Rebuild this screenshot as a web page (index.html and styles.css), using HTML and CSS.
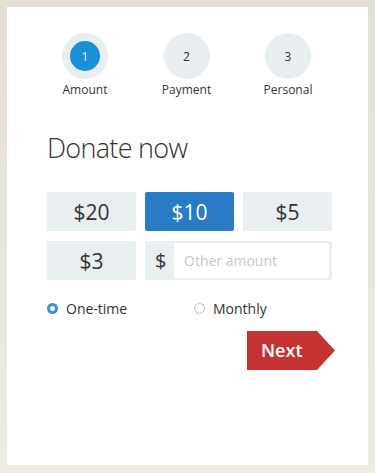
FILE: index.html
```html
<!DOCTYPE html>
<html><head>
<title>Donate now</title>
<link rel="stylesheet" href="styles.css">
<meta charset="UTF-8">
</head>
<body>
<div class="card">

<div class="steps">
  <div class="step active"><div class="dot"><span>1</span></div><div class="label">Amount</div></div>
  <div class="step"><div class="dot"><span>2</span></div><div class="label">Payment</div></div>
  <div class="step"><div class="dot"><span>3</span></div><div class="label">Personal</div></div>
</div>

<h1>Donate now</h1>

<div class="amounts">
  <div class="amt">$20</div>
  <div class="amt selected">$10</div>
  <div class="amt">$5</div>
  <div class="amt">$3</div>
  <div class="other">
    <span class="cur">$</span>
    <div class="field">Other amount</div>
  </div>
</div>

<div class="freq">
  <div class="opt"><span class="radio on"></span>One-time</div>
  <div class="opt"><span class="radio"></span>Monthly</div>
</div>

<div class="actions">
  <div class="next">Next</div>
</div>

</div>
</body></html>
```

FILE: styles.css
```css
html { background: #e6e3da; }
body {
  margin: 0;
  padding: 7px;
  font-family: "Open Sans", "Liberation Sans", sans-serif;
  color: #333;
  background: linear-gradient(#e3dfd5, #eeebe3);
  min-height: 473px;
  box-sizing: border-box;
}

.card {
  background: #fff;
  height: 458px;
  padding: 26px 36px 0 40px;
  box-sizing: border-box;
}

/* progress steps */
.steps {
  display: flex;
  justify-content: space-between;
  padding: 0 9px 0 3px;
}
.step { width: 70px; display: flex; flex-direction: column; align-items: center; }
.dot {
  width: 46px; height: 46px;
  border-radius: 50%;
  background: #e8edf0;
  display: flex; align-items: center; justify-content: center;
}
.dot span {
  width: 30px; height: 30px;
  border-radius: 50%;
  display: flex; align-items: center; justify-content: center;
  font-size: 12px;
  color: #333;
}
.step.active .dot span { background: #1a8fd6; color: #fff; }
.label { font-size: 12px; margin-top: 2px; color: #333; }

h1 {
  font-weight: 300;
  font-size: 27px;
  letter-spacing: -0.7px;
  margin: 32px 0 0 0;
  line-height: 36px;
  color: #333;
}

/* amount grid */
.amounts {
  margin-top: 26px;
  display: grid;
  grid-template-columns: 89px 89px 89px;
  gap: 10px 9px;
}
.amt {
  height: 39px;
  background: #e9eef1;
  border-radius: 2px;
  display: flex; align-items: center; justify-content: center;
  font-size: 21px;
  color: #333;
}
.amt.selected { background: #2a7bc5; color: #fff; }
.other {
  grid-column: span 2;
  height: 39px;
  background: #e9eef1;
  border-radius: 2px;
  display: flex; align-items: center;
  padding: 2px 3px 2px 10px;
  box-sizing: border-box;
}
.cur { font-size: 20px; width: 19px; }
.field {
  flex: 1;
  height: 35px;
  background: #fff;
  border-radius: 2px;
  display: flex; align-items: center;
  padding-left: 10px;
  font-size: 14px;
  color: #c4c8cb;
}

/* frequency */
.freq { display: flex; margin-top: 19px; font-size: 14px; }
.opt { display: flex; align-items: center; flex: none; width: 147px; }
.radio {
  width: 11px; height: 11px;
  border: 1px solid #bbb;
  border-radius: 50%;
  margin-right: 8px;
  box-sizing: border-box;
}
.radio.on { background: #fff; border: 3px solid #3a90dc; }

.actions { display: flex; justify-content: flex-end; margin-top: 13px; margin-right: -3px; }
.next {
  width: 88px; height: 39px;
  background: #c53232;
  clip-path: polygon(0 0, 70px 0, 88px 50%, 70px 100%, 0 100%);
  color: #fff;
  font-weight: 600;
  font-size: 18px;
  line-height: 39px;
  padding-left: 14px;
  box-sizing: border-box;
}
```
